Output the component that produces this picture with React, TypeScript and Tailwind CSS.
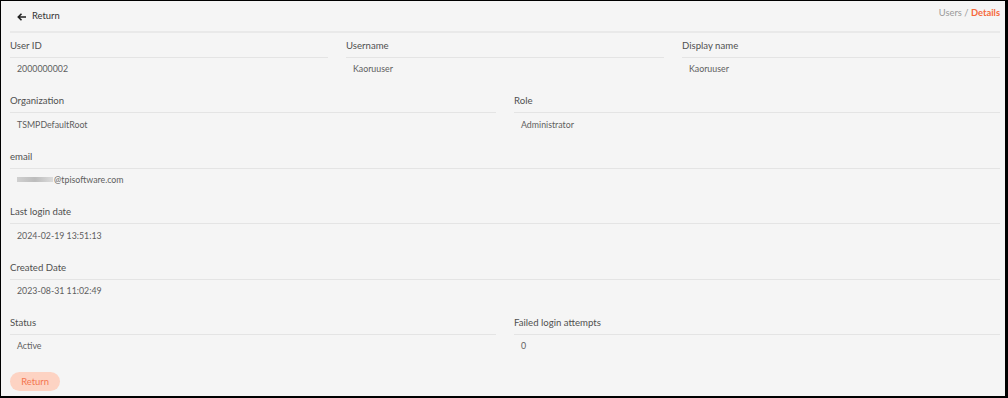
import React from "react";

const font = { fontFamily: 'Lato, "Noto Sans", sans-serif' };

function Field({ label, value, blur }: { label: string; value: string; blur?: boolean }) {
  return (
    <div className="min-w-0 mb-[9.4px]">
      <div className="h-[25px] pt-[1px] leading-[23px] text-[9.6px] text-[#505050] border-b border-[#e4e4e4]">{label}</div>
      <div className="h-[21px] pt-[1px] pl-[7px] text-[8.8px] text-[#5e5e5e] flex items-center">
        {blur && <span className="inline-block w-[36px] h-[5px] mr-[1px] bg-gradient-to-r from-[#d0d0d0] via-[#bcbcbc] to-[#dcdcdc] blur-[0.6px]" />}
        {value}
      </div>
    </div>
  );
}

export default function App() {
  return (
    <div style={font} className="w-[1008px] h-[398px] bg-[#f5f5f5] border-l border-t border-r-[3px] border-b-2 border-black flex flex-col pl-[9px] pr-[5px] overflow-hidden">
      <div className="h-[32px] flex justify-between border-b-2 border-[#e9e9e9] shrink-0">
        <div className="flex items-center gap-[5px] pl-[7px] pt-[1px] text-[9.4px] text-[#333]">
          <svg width="10" height="10" viewBox="0 0 10 10" fill="none" stroke="#222" strokeWidth="1.6">
            <path d="M9 5H1.5M4.5 1.8L1.3 5l3.2 3.2" />
          </svg>
          <span>Return</span>
        </div>
        <div className="pt-[4px] text-[9.4px] leading-[16px]">
          <span className="text-[#9a9a9a]">Users / </span>
          <span className="text-[#f5693c] font-bold">Details</span>
        </div>
      </div>
      <div className="grid grid-cols-3 gap-x-[18px]">
        <Field label="User ID" value="2000000002" />
        <Field label="Username" value="Kaoruuser" />
        <Field label="Display name" value="Kaoruuser" />
      </div>
      <div className="grid grid-cols-2 gap-x-[18px]">
        <Field label="Organization" value="TSMPDefaultRoot" />
        <Field label="Role" value="Administrator" />
      </div>
      <Field label="email" value="@tpisoftware.com" blur />
      <Field label="Last login date" value="2024-02-19 13:51:13" />
      <Field label="Created Date" value="2023-08-31 11:02:49" />
      <div className="grid grid-cols-2 gap-x-[18px]">
        <Field label="Status" value="Active" />
        <Field label="Failed login attempts" value="0" />
      </div>
      <div className="pt-[2px]">
        <button className="h-[19px] w-[50px] rounded-full bg-[#fdd3c3] text-[#f4764f] text-[9.4px] leading-[19px]">Return</button>
      </div>
    </div>
  );
}
